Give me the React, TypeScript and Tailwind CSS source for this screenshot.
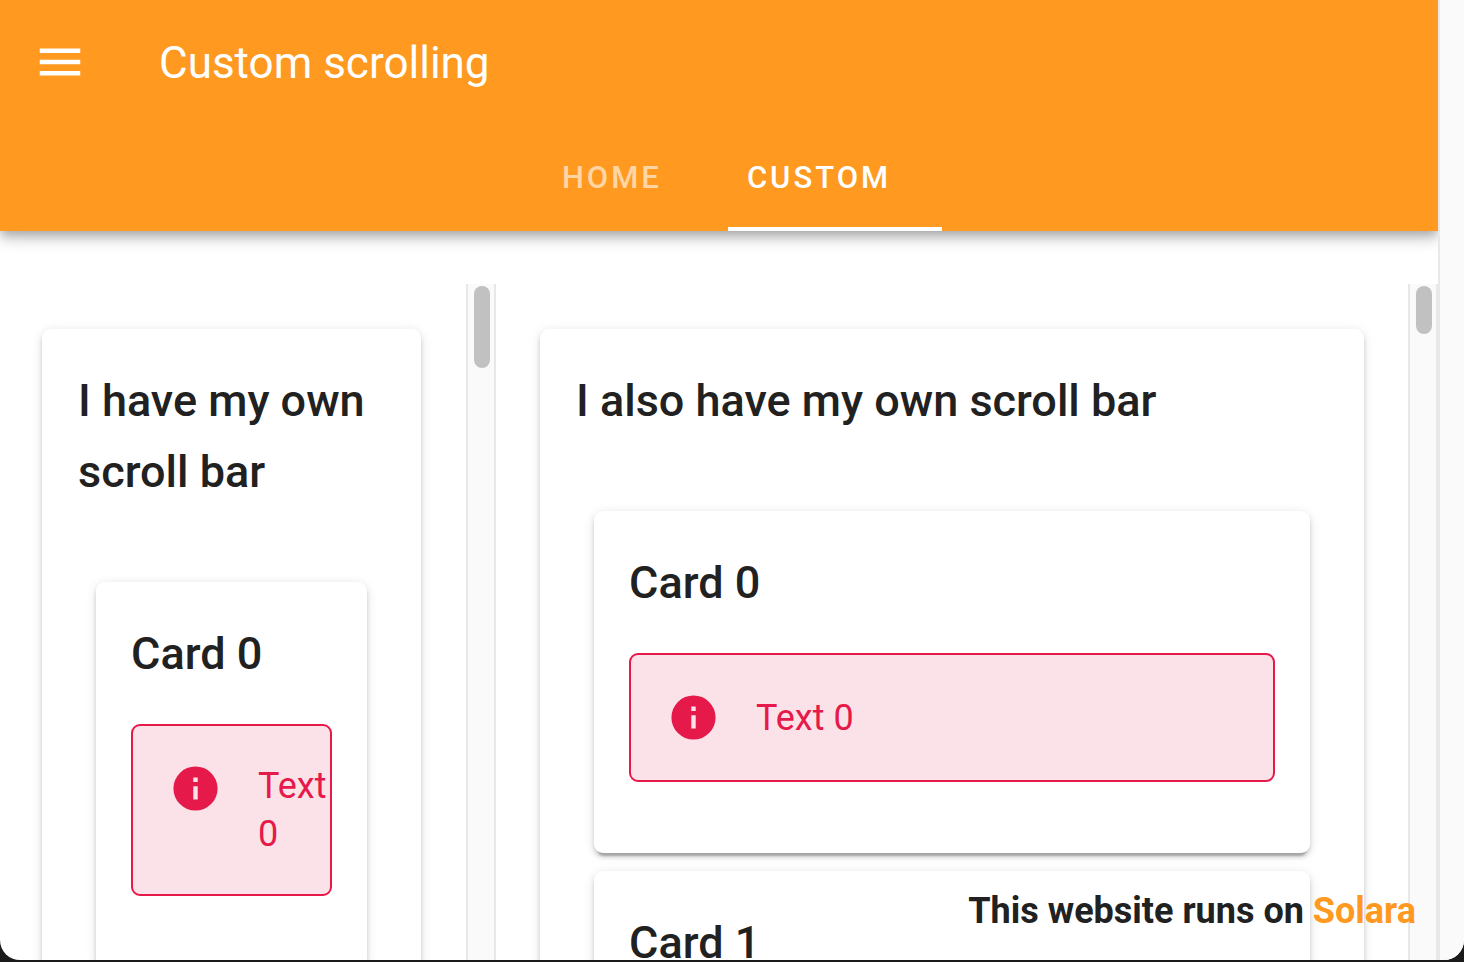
import React from "react";

function MenuIcon() {
  return (
    <svg viewBox="0 0 24 24" className="size-[54px]" fill="currentColor" aria-hidden="true">
      <path d="M3,6H21V8H3V6M3,11H21V13H3V11M3,16H21V18H3V16Z" />
    </svg>
  );
}

function InfoIcon() {
  return (
    <svg viewBox="0 0 24 24" className="size-[53px] shrink-0" fill="currentColor" aria-hidden="true">
      <path d="M13,9H11V7H13M13,17H11V11H13M12,2A10,10 0 0,0 2,12A10,10 0 0,0 12,22A10,10 0 0,0 22,12A10,10 0 0,0 12,2Z" />
    </svg>
  );
}

const cardClass =
  "rounded-[9px] bg-white pt-9 pb-[35px] shadow-[0_7px_2px_-4px_rgba(0,0,0,0.2),0_4px_4px_0_rgba(0,0,0,0.14),0_2px_11px_0_rgba(0,0,0,0.12)]";

function InfoCard({ index }: { index: number }) {
  return (
    <article className={`px-[35px] ${cardClass}`}>
      <h3 className="text-[45px] leading-[71px] font-medium">Card {index}</h3>
      <div
        role="status"
        className="mt-[35px] mb-9 flex items-start gap-9 rounded-[9px] border-2 border-[#e6194b] bg-[#fbe2e8] p-9 text-[#e6194b]"
      >
        <InfoIcon />
        <p className="min-w-0 flex-1 self-center text-[36px] leading-[48px]">Text {index}</p>
      </div>
    </article>
  );
}

function ScrollTrack({ thumb }: { thumb: string }) {
  return (
    <div className="flex w-[30px] shrink-0 justify-center border-x-2 border-[#e8e8e8] bg-[#fafafa] pt-0.5 pl-0.5">
      <div className={`w-4 rounded-full bg-[#c1c1c1] ${thumb}`} />
    </div>
  );
}

interface ColumnProps {
  title: string;
  cards: number[];
  pad: string;
  thumb: string;
}

function Column({ title, cards, pad, thumb }: ColumnProps) {
  return (
    <section className="flex min-h-0 min-w-0">
      <div className={`min-w-0 flex-1 overflow-hidden pt-[45px] ${pad}`}>
        <div className={`px-9 ${cardClass}`}>
          <h2 className="text-[45px] leading-[71px] font-medium">{title}</h2>
          <div className="mt-[75px] flex flex-col gap-[18px] px-[18px]">
            {cards.map((i) => (
              <InfoCard key={i} index={i} />
            ))}
          </div>
        </div>
      </div>
      <ScrollTrack thumb={thumb} />
    </section>
  );
}

export default function App() {
  return (
    <div className="h-screen overflow-hidden bg-[#1a1a1a] pb-0.5 font-['Roboto',sans-serif] text-[#212121]">
      <div className="relative flex h-full overflow-hidden rounded-b-[20px] bg-white">
        <div className="flex min-w-0 flex-1 flex-col overflow-hidden">
          <header className="relative z-10 bg-[#ff991f] text-white shadow-[0_4px_9px_-2px_rgba(0,0,0,0.2),0_9px_11px_0_rgba(0,0,0,0.14),0_2px_22px_0_rgba(0,0,0,0.12)]">
            <div className="flex h-[124px] items-center gap-[72px] pl-[33px]">
              <button type="button" aria-label="Open menu">
                <MenuIcon />
              </button>
              <h1 className="pt-0.5 text-[44px] leading-[66px]">Custom scrolling</h1>
            </div>
            <nav className="flex h-[107px] justify-center text-[31px] font-medium tracking-[3px]">
              <a href="#home" className="flex min-w-[200px] items-center justify-center px-[35px] pt-0.5 text-white/60">
                HOME
              </a>
              <a
                href="#custom"
                aria-current="page"
                className="relative flex min-w-[200px] items-center justify-center px-[35px] pt-0.5"
              >
                CUSTOM
                <span className="absolute -right-4 bottom-0 left-4 h-1 bg-white" />
              </a>
            </nav>
          </header>
          <main className="grid min-h-0 flex-1 grid-cols-[minmax(0,496fr)_minmax(0,942fr)] grid-rows-[minmax(0,1fr)] pt-[53px]">
            <Column title="I have my own scroll bar" cards={[0]} pad="pl-[42px] pr-[45px]" thumb="h-[82px]" />
            <Column title="I also have my own scroll bar" cards={[0, 1]} pad="px-11" thumb="h-12" />
          </main>
        </div>
        <div className="w-[26px] shrink-0 border-l-2 border-[#e8e8e8] bg-[#fafafa]" />
        <p className="absolute right-12 bottom-[22px] z-20 text-[36px] leading-[54px] font-bold">
          This website runs on{" "}
          <a href="#solara" className="text-[#ff991f]">
            Solara
          </a>
        </p>
      </div>
    </div>
  );
}
